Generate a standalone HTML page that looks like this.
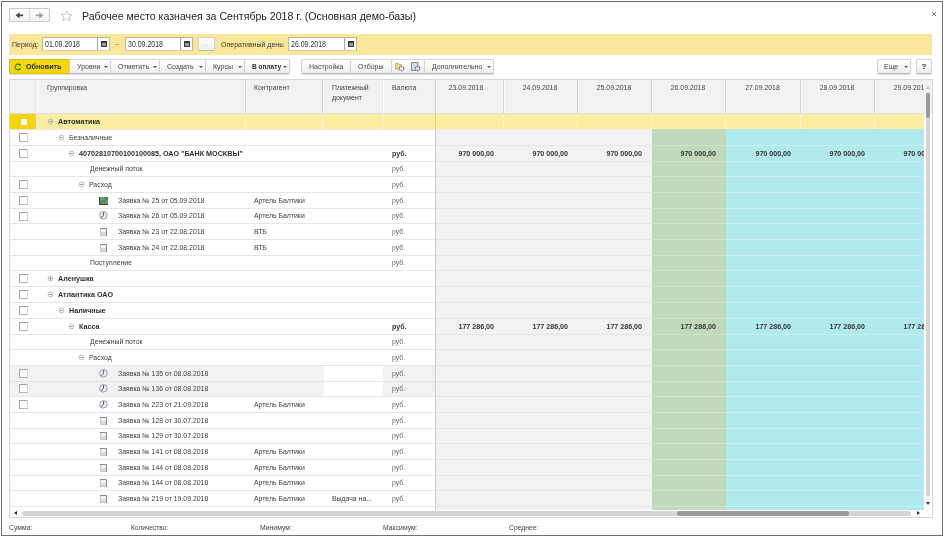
<!DOCTYPE html>
<html><head><meta charset="utf-8"><style>
*{margin:0;padding:0;box-sizing:border-box}
html,body{width:943px;height:536px;overflow:hidden;background:#fff;font-family:"Liberation Sans",sans-serif;color:#3c3c3c}
.a{position:absolute}
.t{position:absolute;white-space:nowrap;line-height:10px;height:10px}
.btn{position:absolute;top:59px;height:15px;border:1px solid #d2d2d2;border-bottom-color:#b5b5b5;border-radius:1.5px;box-shadow:0 1px 1px rgba(0,0,0,0.12);background:linear-gradient(#ffffff,#eeeeee);font-size:7px;line-height:13px;color:#4a4a4a;white-space:nowrap}
.arr{position:absolute;top:6px;width:0;height:0;border-left:2px solid transparent;border-right:2px solid transparent;border-top:2px solid #555}
.inp{position:absolute;top:37px;height:14px;background:#fff;border:1px solid #c2b88f;border-bottom-color:#d8cfa8;font-size:7px;line-height:12px;color:#333}
.cal{position:absolute;top:0;right:0;width:12px;height:12px;border-left:1px solid #a8a8a8;background:#fff}
.cal:after{content:"";box-sizing:border-box;position:absolute;left:3px;top:3px;width:6px;height:6px;background:#9a9a9a;border:1px solid #3a3a3a;border-top-width:2px}
.cb{position:absolute;width:9px;height:9px;border:1px solid #a4a4a4;border-right-color:#d4d4d4;border-bottom-color:#b4b4b4;background:#fff}
</style></head><body><div style="position:absolute;left:0;top:0;width:943px;height:536px;overflow:hidden;filter:blur(0.35px)">

<div class="a" style="left:1px;top:1px;width:942px;height:535px;border:1px solid #6f6f6f"></div>
<div class="a" style="left:9px;top:8px;width:41px;height:14px;border:1px solid #c9c9c9;border-radius:1px;background:linear-gradient(#fff,#f1f1f1)"></div>
<div class="a" style="left:29px;top:9px;width:1px;height:12px;background:#dedede"></div>
<svg class="a" style="left:14px;top:10px" width="10" height="10" viewBox="0 0 10 10"><path d="M1.6 5.3L5.6 2.2V8.4Z" fill="#484848"/><rect x="5" y="4.5" width="4.2" height="1.7" fill="#484848"/></svg>
<svg class="a" style="left:35px;top:10px" width="10" height="10" viewBox="0 0 10 10"><path d="M8.4 5.3L4.4 2.2V8.4Z" fill="#a0a0a0"/><rect x="0.8" y="4.5" width="4.2" height="1.7" fill="#a0a0a0"/></svg>
<svg class="a" style="left:60px;top:10px" width="13" height="12" viewBox="0 0 13 12"><path d="M6.5 0.8L8.1 4.4L12 4.6L9 7.1L10.1 11L6.5 8.8L2.9 11L4 7.1L1 4.6L4.9 4.4Z" fill="none" stroke="#c4c4c4" stroke-width="0.9"/></svg>
<div class="t" style="left:82px;top:10px;font-size:10.6px;line-height:12px;height:12px;color:#1e1e1e">Рабочее место казначея за Сентябрь 2018 г. (Основная демо-базы)</div>
<svg class="a" style="left:931px;top:11px" width="6" height="6" viewBox="0 0 6 6"><path d="M1 1L5 5M5 1L1 5" stroke="#666" stroke-width="0.9"/></svg>
<div class="a" style="left:9px;top:34px;width:923px;height:21px;background:#f9e79b"></div>
<div class="t" style="left:12px;top:40px;font-size:7px;color:#383838">Период:</div>
<div class="inp" style="left:42px;width:68px"><span style="position:absolute;left:2px;top:0;font-size:8.5px;transform:scaleX(0.82);transform-origin:0 50%">01.09.2018</span><div class="cal"></div></div>
<div class="t" style="left:115px;top:39px;font-size:7px;color:#777">–</div>
<div class="inp" style="left:125px;width:68px"><span style="position:absolute;left:2px;top:0;font-size:8.5px;transform:scaleX(0.82);transform-origin:0 50%">30.09.2018</span><div class="cal"></div></div>
<div class="a" style="left:198px;top:37px;width:17px;height:14px;border:1px solid #d2d2d2;border-bottom-color:#b8b8b8;border-radius:2px;background:linear-gradient(#fff,#efefef);font-size:6px;color:#999;text-align:center;line-height:13px">...</div>
<div class="t" style="left:221px;top:40px;font-size:7px;color:#383838">Оперативный день:</div>
<div class="inp" style="left:288px;width:69px"><span style="position:absolute;left:2px;top:0;font-size:8.5px;transform:scaleX(0.82);transform-origin:0 50%">26.09.2018</span><div class="cal"></div></div>
<div class="btn" style="left:9px;width:61px;background:#f2d80e;border-color:#d9c000;border-radius:1px"><svg class="a" style="left:3.5px;top:3px" width="8" height="8" viewBox="0 0 8 8"><path d="M6.2 2.2A2.8 2.8 0 1 0 6.6 5" fill="none" stroke="#3d8a1e" stroke-width="1.3"/><circle cx="6" cy="1.8" r="1" fill="#2f7a16"/></svg><span style="position:absolute;left:16px;top:0;font-weight:bold;color:#2e2e2e;font-size:7.2px">Обновить</span></div>
<div class="btn" style="left:69px;width:42px"><span style="position:absolute;left:7px;top:0;">Уровни</span><div class="arr" style="left:34px"></div></div>
<div class="btn" style="left:110px;width:50px"><span style="position:absolute;left:7px;top:0;">Отметить</span><div class="arr" style="left:42px"></div></div>
<div class="btn" style="left:159px;width:47px"><span style="position:absolute;left:7px;top:0;">Создать</span><div class="arr" style="left:39px"></div></div>
<div class="btn" style="left:205px;width:40px"><span style="position:absolute;left:7px;top:0;">Курсы</span><div class="arr" style="left:32px"></div></div>
<div class="btn" style="left:244px;width:46px"><span style="position:absolute;left:7px;top:0;font-weight:bold;color:#333;font-size:6.5px">В оплату</span><div class="arr" style="left:38px"></div></div>
<div class="btn" style="left:301px;width:50px"><span style="position:absolute;left:7px;top:0;">Настройка</span></div>
<div class="btn" style="left:350px;width:42px"><span style="position:absolute;left:7px;top:0;">Отборы</span></div>
<div class="btn" style="left:391px;width:34px"><svg class="a" style="left:3px;top:2px" width="10" height="10" viewBox="0 0 10 10"><path d="M0.5 1.5H3.5L4.5 2.5H6.5V7H0.5Z" fill="#e8d98a" stroke="#b9a654" stroke-width="0.8"/><circle cx="6.6" cy="6.6" r="2.3" fill="#e4e4e4" stroke="#6a6a6a" stroke-width="1.1" stroke-dasharray="1.3 0.9"/></svg><svg class="a" style="left:19px;top:2px" width="10" height="10" viewBox="0 0 10 10"><rect x="0.5" y="0.5" width="6.5" height="8" fill="#cfdcee" stroke="#6f86a8" stroke-width="0.9"/><circle cx="6.6" cy="6.6" r="2.3" fill="#e4e4e4" stroke="#5a5a5a" stroke-width="1.1" stroke-dasharray="1.3 0.9"/></svg></div>
<div class="btn" style="left:424px;width:70px"><span style="position:absolute;left:7px;top:0;">Дополнительно</span><div class="arr" style="left:62px"></div></div>
<div class="btn" style="left:877px;width:34px"><span style="position:absolute;left:6px;top:0;">Еще</span><div class="arr" style="left:26px"></div></div>
<div class="btn" style="left:916px;width:16px;font-weight:bold;text-align:center;color:#333;font-size:8px">?</div>
<div class="a" style="left:9px;top:79px;width:924px;height:439px;border:1px solid #d6d6d6;background:#fff"></div>
<div class="a" style="left:10px;top:80px;width:922px;height:33px;background:#f2f2f2"></div>
<div class="a" style="left:436px;top:129px;width:216px;height:381px;background:#f2f2f2"></div>
<div class="a" style="left:652px;top:129px;width:74px;height:381px;background:#c3d9be"></div>
<div class="a" style="left:726px;top:129px;width:198px;height:381px;background:#b1eaec"></div>
<div class="a" style="left:10px;top:113px;width:914px;height:16px;background:#fbeda1"></div>
<div class="a" style="left:10px;top:113px;width:27px;height:16px;background:#f4d40c"></div>
<div class="a" style="left:10px;top:365px;width:426px;height:31px;background:#f2f2f2"></div>
<div class="a" style="left:324px;top:366px;width:59px;height:30px;background:#fff"></div>
<div class="a" style="left:10px;top:129px;width:426px;height:1px;background:#e6e6e6"></div>
<div class="a" style="left:10px;top:145px;width:426px;height:1px;background:#e6e6e6"></div>
<div class="a" style="left:436px;top:145px;width:216px;height:1px;background:#e6e6e6"></div>
<div class="a" style="left:652px;top:145px;width:74px;height:1px;background:#d0e2cc"></div>
<div class="a" style="left:726px;top:145px;width:198px;height:1px;background:#c6eff0"></div>
<div class="a" style="left:10px;top:161px;width:426px;height:1px;background:#e6e6e6"></div>
<div class="a" style="left:436px;top:161px;width:216px;height:1px;background:#e6e6e6"></div>
<div class="a" style="left:652px;top:161px;width:74px;height:1px;background:#d0e2cc"></div>
<div class="a" style="left:726px;top:161px;width:198px;height:1px;background:#c6eff0"></div>
<div class="a" style="left:10px;top:176px;width:426px;height:1px;background:#e6e6e6"></div>
<div class="a" style="left:436px;top:176px;width:216px;height:1px;background:#e6e6e6"></div>
<div class="a" style="left:652px;top:176px;width:74px;height:1px;background:#d0e2cc"></div>
<div class="a" style="left:726px;top:176px;width:198px;height:1px;background:#c6eff0"></div>
<div class="a" style="left:10px;top:192px;width:426px;height:1px;background:#e6e6e6"></div>
<div class="a" style="left:436px;top:192px;width:216px;height:1px;background:#e6e6e6"></div>
<div class="a" style="left:652px;top:192px;width:74px;height:1px;background:#d0e2cc"></div>
<div class="a" style="left:726px;top:192px;width:198px;height:1px;background:#c6eff0"></div>
<div class="a" style="left:10px;top:208px;width:426px;height:1px;background:#e6e6e6"></div>
<div class="a" style="left:436px;top:208px;width:216px;height:1px;background:#e6e6e6"></div>
<div class="a" style="left:652px;top:208px;width:74px;height:1px;background:#d0e2cc"></div>
<div class="a" style="left:726px;top:208px;width:198px;height:1px;background:#c6eff0"></div>
<div class="a" style="left:10px;top:223px;width:426px;height:1px;background:#e6e6e6"></div>
<div class="a" style="left:436px;top:223px;width:216px;height:1px;background:#e6e6e6"></div>
<div class="a" style="left:652px;top:223px;width:74px;height:1px;background:#d0e2cc"></div>
<div class="a" style="left:726px;top:223px;width:198px;height:1px;background:#c6eff0"></div>
<div class="a" style="left:10px;top:239px;width:426px;height:1px;background:#e6e6e6"></div>
<div class="a" style="left:436px;top:239px;width:216px;height:1px;background:#e6e6e6"></div>
<div class="a" style="left:652px;top:239px;width:74px;height:1px;background:#d0e2cc"></div>
<div class="a" style="left:726px;top:239px;width:198px;height:1px;background:#c6eff0"></div>
<div class="a" style="left:10px;top:255px;width:426px;height:1px;background:#e6e6e6"></div>
<div class="a" style="left:436px;top:255px;width:216px;height:1px;background:#e6e6e6"></div>
<div class="a" style="left:652px;top:255px;width:74px;height:1px;background:#d0e2cc"></div>
<div class="a" style="left:726px;top:255px;width:198px;height:1px;background:#c6eff0"></div>
<div class="a" style="left:10px;top:270px;width:426px;height:1px;background:#e6e6e6"></div>
<div class="a" style="left:436px;top:270px;width:216px;height:1px;background:#e6e6e6"></div>
<div class="a" style="left:652px;top:270px;width:74px;height:1px;background:#d0e2cc"></div>
<div class="a" style="left:726px;top:270px;width:198px;height:1px;background:#c6eff0"></div>
<div class="a" style="left:10px;top:286px;width:426px;height:1px;background:#e6e6e6"></div>
<div class="a" style="left:436px;top:286px;width:216px;height:1px;background:#e6e6e6"></div>
<div class="a" style="left:652px;top:286px;width:74px;height:1px;background:#d0e2cc"></div>
<div class="a" style="left:726px;top:286px;width:198px;height:1px;background:#c6eff0"></div>
<div class="a" style="left:10px;top:302px;width:426px;height:1px;background:#e6e6e6"></div>
<div class="a" style="left:436px;top:302px;width:216px;height:1px;background:#e6e6e6"></div>
<div class="a" style="left:652px;top:302px;width:74px;height:1px;background:#d0e2cc"></div>
<div class="a" style="left:726px;top:302px;width:198px;height:1px;background:#c6eff0"></div>
<div class="a" style="left:10px;top:318px;width:426px;height:1px;background:#e6e6e6"></div>
<div class="a" style="left:436px;top:318px;width:216px;height:1px;background:#e6e6e6"></div>
<div class="a" style="left:652px;top:318px;width:74px;height:1px;background:#d0e2cc"></div>
<div class="a" style="left:726px;top:318px;width:198px;height:1px;background:#c6eff0"></div>
<div class="a" style="left:10px;top:334px;width:426px;height:1px;background:#e6e6e6"></div>
<div class="a" style="left:436px;top:334px;width:216px;height:1px;background:#e6e6e6"></div>
<div class="a" style="left:652px;top:334px;width:74px;height:1px;background:#d0e2cc"></div>
<div class="a" style="left:726px;top:334px;width:198px;height:1px;background:#c6eff0"></div>
<div class="a" style="left:10px;top:349px;width:426px;height:1px;background:#e6e6e6"></div>
<div class="a" style="left:436px;top:349px;width:216px;height:1px;background:#e6e6e6"></div>
<div class="a" style="left:652px;top:349px;width:74px;height:1px;background:#d0e2cc"></div>
<div class="a" style="left:726px;top:349px;width:198px;height:1px;background:#c6eff0"></div>
<div class="a" style="left:10px;top:365px;width:426px;height:1px;background:#e6e6e6"></div>
<div class="a" style="left:436px;top:365px;width:216px;height:1px;background:#e6e6e6"></div>
<div class="a" style="left:652px;top:365px;width:74px;height:1px;background:#d0e2cc"></div>
<div class="a" style="left:726px;top:365px;width:198px;height:1px;background:#c6eff0"></div>
<div class="a" style="left:10px;top:381px;width:426px;height:1px;background:#e6e6e6"></div>
<div class="a" style="left:436px;top:381px;width:216px;height:1px;background:#e6e6e6"></div>
<div class="a" style="left:652px;top:381px;width:74px;height:1px;background:#d0e2cc"></div>
<div class="a" style="left:726px;top:381px;width:198px;height:1px;background:#c6eff0"></div>
<div class="a" style="left:10px;top:396px;width:426px;height:1px;background:#e6e6e6"></div>
<div class="a" style="left:436px;top:396px;width:216px;height:1px;background:#e6e6e6"></div>
<div class="a" style="left:652px;top:396px;width:74px;height:1px;background:#d0e2cc"></div>
<div class="a" style="left:726px;top:396px;width:198px;height:1px;background:#c6eff0"></div>
<div class="a" style="left:10px;top:412px;width:426px;height:1px;background:#e6e6e6"></div>
<div class="a" style="left:436px;top:412px;width:216px;height:1px;background:#e6e6e6"></div>
<div class="a" style="left:652px;top:412px;width:74px;height:1px;background:#d0e2cc"></div>
<div class="a" style="left:726px;top:412px;width:198px;height:1px;background:#c6eff0"></div>
<div class="a" style="left:10px;top:428px;width:426px;height:1px;background:#e6e6e6"></div>
<div class="a" style="left:436px;top:428px;width:216px;height:1px;background:#e6e6e6"></div>
<div class="a" style="left:652px;top:428px;width:74px;height:1px;background:#d0e2cc"></div>
<div class="a" style="left:726px;top:428px;width:198px;height:1px;background:#c6eff0"></div>
<div class="a" style="left:10px;top:443px;width:426px;height:1px;background:#e6e6e6"></div>
<div class="a" style="left:436px;top:443px;width:216px;height:1px;background:#e6e6e6"></div>
<div class="a" style="left:652px;top:443px;width:74px;height:1px;background:#d0e2cc"></div>
<div class="a" style="left:726px;top:443px;width:198px;height:1px;background:#c6eff0"></div>
<div class="a" style="left:10px;top:459px;width:426px;height:1px;background:#e6e6e6"></div>
<div class="a" style="left:436px;top:459px;width:216px;height:1px;background:#e6e6e6"></div>
<div class="a" style="left:652px;top:459px;width:74px;height:1px;background:#d0e2cc"></div>
<div class="a" style="left:726px;top:459px;width:198px;height:1px;background:#c6eff0"></div>
<div class="a" style="left:10px;top:475px;width:426px;height:1px;background:#e6e6e6"></div>
<div class="a" style="left:436px;top:475px;width:216px;height:1px;background:#e6e6e6"></div>
<div class="a" style="left:652px;top:475px;width:74px;height:1px;background:#d0e2cc"></div>
<div class="a" style="left:726px;top:475px;width:198px;height:1px;background:#c6eff0"></div>
<div class="a" style="left:10px;top:490px;width:426px;height:1px;background:#e6e6e6"></div>
<div class="a" style="left:436px;top:490px;width:216px;height:1px;background:#e6e6e6"></div>
<div class="a" style="left:652px;top:490px;width:74px;height:1px;background:#d0e2cc"></div>
<div class="a" style="left:726px;top:490px;width:198px;height:1px;background:#c6eff0"></div>
<div class="a" style="left:10px;top:506px;width:426px;height:1px;background:#e6e6e6"></div>
<div class="a" style="left:436px;top:506px;width:216px;height:1px;background:#e6e6e6"></div>
<div class="a" style="left:652px;top:506px;width:74px;height:1px;background:#d0e2cc"></div>
<div class="a" style="left:726px;top:506px;width:198px;height:1px;background:#c6eff0"></div>
<div class="a" style="left:36px;top:80px;width:1px;height:33px;background:#e8e8e8"></div>
<div class="a" style="left:37px;top:80px;width:1px;height:33px;background:#ffffff"></div>
<div class="a" style="left:36px;top:113px;width:1px;height:16px;background:#fff6c8"></div>
<div class="a" style="left:245px;top:80px;width:1px;height:33px;background:#d4d4d4"></div>
<div class="a" style="left:246px;top:80px;width:1px;height:33px;background:#fafafa"></div>
<div class="a" style="left:245px;top:113px;width:1px;height:16px;background:#fff6c8"></div>
<div class="a" style="left:322px;top:80px;width:1px;height:33px;background:#d4d4d4"></div>
<div class="a" style="left:323px;top:80px;width:1px;height:33px;background:#fafafa"></div>
<div class="a" style="left:322px;top:113px;width:1px;height:16px;background:#fff6c8"></div>
<div class="a" style="left:382px;top:80px;width:1px;height:33px;background:#e8e8e8"></div>
<div class="a" style="left:383px;top:80px;width:1px;height:33px;background:#ffffff"></div>
<div class="a" style="left:382px;top:113px;width:1px;height:16px;background:#fff6c8"></div>
<div class="a" style="left:435px;top:80px;width:1px;height:33px;background:#d4d4d4"></div>
<div class="a" style="left:436px;top:80px;width:1px;height:33px;background:#fafafa"></div>
<div class="a" style="left:435px;top:113px;width:1px;height:16px;background:#fff6c8"></div>
<div class="a" style="left:503px;top:80px;width:1px;height:33px;background:#d4d4d4"></div>
<div class="a" style="left:504px;top:80px;width:1px;height:33px;background:#fafafa"></div>
<div class="a" style="left:503px;top:113px;width:1px;height:16px;background:#fff6c8"></div>
<div class="a" style="left:577px;top:80px;width:1px;height:33px;background:#d4d4d4"></div>
<div class="a" style="left:578px;top:80px;width:1px;height:33px;background:#fafafa"></div>
<div class="a" style="left:577px;top:113px;width:1px;height:16px;background:#fff6c8"></div>
<div class="a" style="left:651px;top:80px;width:1px;height:33px;background:#d4d4d4"></div>
<div class="a" style="left:652px;top:80px;width:1px;height:33px;background:#fafafa"></div>
<div class="a" style="left:651px;top:113px;width:1px;height:16px;background:#fff6c8"></div>
<div class="a" style="left:725px;top:80px;width:1px;height:33px;background:#d4d4d4"></div>
<div class="a" style="left:726px;top:80px;width:1px;height:33px;background:#fafafa"></div>
<div class="a" style="left:725px;top:113px;width:1px;height:16px;background:#fff6c8"></div>
<div class="a" style="left:800px;top:80px;width:1px;height:33px;background:#d4d4d4"></div>
<div class="a" style="left:801px;top:80px;width:1px;height:33px;background:#fafafa"></div>
<div class="a" style="left:800px;top:113px;width:1px;height:16px;background:#fff6c8"></div>
<div class="a" style="left:874px;top:80px;width:1px;height:33px;background:#d4d4d4"></div>
<div class="a" style="left:875px;top:80px;width:1px;height:33px;background:#fafafa"></div>
<div class="a" style="left:874px;top:113px;width:1px;height:16px;background:#fff6c8"></div>
<div class="a" style="left:435px;top:80px;width:1px;height:430px;background:#cdcdcd"></div>
<div class="a" style="left:10px;top:113px;width:914px;height:1px;background:#e0e0e0"></div>
<div class="t" style="left:47px;top:83px;font-size:6.9px;line-height:9.5px;height:auto;color:#444">Группировка</div>
<div class="t" style="left:254px;top:83px;font-size:6.9px;line-height:9.5px;height:auto;color:#444">Контрагент</div>
<div class="t" style="left:332px;top:83px;font-size:6.9px;line-height:9.5px;height:auto;color:#444">Платежный<br>документ</div>
<div class="t" style="left:392px;top:83px;font-size:6.9px;line-height:9.5px;height:auto;color:#444">Валюта</div>
<div class="t" style="left:429px;width:74px;top:83px;font-size:6.9px;text-align:center;color:#444">23.09.2018</div>
<div class="t" style="left:503px;width:74px;top:83px;font-size:6.9px;text-align:center;color:#444">24.09.2018</div>
<div class="t" style="left:577px;width:74px;top:83px;font-size:6.9px;text-align:center;color:#444">25.09.2018</div>
<div class="t" style="left:651px;width:74px;top:83px;font-size:6.9px;text-align:center;color:#444">26.09.2018</div>
<div class="t" style="left:725px;width:75px;top:83px;font-size:6.9px;text-align:center;color:#444">27.09.2018</div>
<div class="t" style="left:800px;width:74px;top:83px;font-size:6.9px;text-align:center;color:#444">28.09.2018</div>
<div class="a" style="left:874px;top:80px;width:50px;height:33px;overflow:hidden"><div class="t" style="left:0;width:74px;top:3px;font-size:6.9px;text-align:center;color:#444">29.09.2018</div></div>
<div class="a" style="left:924px;top:113px;width:8px;height:404px;background:#fff"></div>
<div class="a" style="left:926px;top:86px;width:0;height:0;border-left:2px solid transparent;border-right:2px solid transparent;border-bottom:3px solid #c4c4c4"></div>
<div class="a" style="left:926px;top:92px;width:4px;height:405px;border-radius:2px;background:#d5d5d5"></div>
<div class="a" style="left:926px;top:93px;width:4px;height:25px;border-radius:2px;background:#999"></div>
<div class="a" style="left:926px;top:502px;width:0;height:0;border-left:2.5px solid transparent;border-right:2.5px solid transparent;border-top:3px solid #333"></div>
<div class="a" style="left:10px;top:510px;width:914px;height:7px;background:#fff"></div>
<div class="a" style="left:14px;top:511px;width:0;height:0;border-top:2.5px solid transparent;border-bottom:2.5px solid transparent;border-right:3px solid #333"></div>
<div class="a" style="left:22px;top:511px;width:889px;height:5px;border-radius:2.5px;background:#d5d5d5"></div>
<div class="a" style="left:677px;top:511px;width:172px;height:5px;border-radius:2.5px;background:#9a9a9a"></div>
<div class="a" style="left:917px;top:511px;width:0;height:0;border-top:2.5px solid transparent;border-bottom:2.5px solid transparent;border-left:3px solid #333"></div>
<div class="cb" style="left:20px;top:118px;width:8px;height:8px;border-color:#e6cc3a;background:#fffbe2"></div>
<svg class="a" style="left:46.5px;top:117.5px" width="7" height="7" viewBox="0 0 7 7"><circle cx="3.5" cy="3.5" r="2.4" fill="none" stroke="#aaa" stroke-width="0.8"/><path d="M2.2 3.5H4.8" stroke="#888" stroke-width="0.9"/></svg>
<div class="t" style="left:58px;top:117px;font-size:7.2px;font-weight:bold;color:#2e2e2e">Автоматика</div>
<div class="cb" style="left:19px;top:133px"></div>
<svg class="a" style="left:57.5px;top:133.5px" width="7" height="7" viewBox="0 0 7 7"><circle cx="3.5" cy="3.5" r="2.4" fill="none" stroke="#aaa" stroke-width="0.8"/><path d="M2.2 3.5H4.8" stroke="#888" stroke-width="0.9"/></svg>
<div class="t" style="left:69px;top:133px;font-size:6.9px;font-weight:normal;color:#3c3c3c">Безналичные</div>
<div class="cb" style="left:19px;top:149px"></div>
<svg class="a" style="left:67.5px;top:149.5px" width="7" height="7" viewBox="0 0 7 7"><circle cx="3.5" cy="3.5" r="2.4" fill="none" stroke="#aaa" stroke-width="0.8"/><path d="M2.2 3.5H4.8" stroke="#888" stroke-width="0.9"/></svg>
<div class="t" style="left:79px;top:149px;font-size:7.2px;font-weight:bold;color:#2e2e2e">40702810700100100085, ОАО "БАНК МОСКВЫ"</div>
<div class="t" style="left:392px;top:149px;font-size:7.1px;font-weight:bold;color:#333">руб.</div>
<div class="t" style="left:429px;width:65px;top:149px;font-size:7.1px;font-weight:bold;color:#333;text-align:right">970 000,00</div>
<div class="t" style="left:503px;width:65px;top:149px;font-size:7.1px;font-weight:bold;color:#333;text-align:right">970 000,00</div>
<div class="t" style="left:577px;width:65px;top:149px;font-size:7.1px;font-weight:bold;color:#333;text-align:right">970 000,00</div>
<div class="t" style="left:651px;width:65px;top:149px;font-size:7.1px;font-weight:bold;color:#333;text-align:right">970 000,00</div>
<div class="t" style="left:725px;width:66px;top:149px;font-size:7.1px;font-weight:bold;color:#333;text-align:right">970 000,00</div>
<div class="t" style="left:800px;width:65px;top:149px;font-size:7.1px;font-weight:bold;color:#333;text-align:right">970 000,00</div>
<div class="a" style="left:874px;top:146px;width:50px;height:15px;overflow:hidden"><div class="t" style="left:0;width:65px;top:3px;font-size:7.1px;font-weight:bold;color:#333;text-align:right">970 000,00</div></div>
<div class="t" style="left:90px;top:164px;font-size:6.9px;font-weight:normal;color:#3c3c3c">Денежный поток</div>
<div class="t" style="left:392px;top:164px;font-size:6.9px;font-weight:normal;color:#666">руб.</div>
<div class="cb" style="left:19px;top:180px"></div>
<svg class="a" style="left:77.5px;top:180.5px" width="7" height="7" viewBox="0 0 7 7"><circle cx="3.5" cy="3.5" r="2.4" fill="none" stroke="#aaa" stroke-width="0.8"/><path d="M2.2 3.5H4.8" stroke="#888" stroke-width="0.9"/></svg>
<div class="t" style="left:89px;top:180px;font-size:6.9px;font-weight:normal;color:#3c3c3c">Расход</div>
<div class="t" style="left:392px;top:180px;font-size:6.9px;font-weight:normal;color:#666">руб.</div>
<div class="cb" style="left:19px;top:196px"></div>
<svg class="a" style="left:99px;top:197px" width="9" height="8" viewBox="0 0 9 8"><rect x="0" y="0" width="9" height="8" fill="#6f9f6c"/><path d="M0.6 0V8M0 7.4H9" stroke="#3e4a40" stroke-width="1.2"/><path d="M2 5.5L4 3.5L5.5 4.8L8 2" fill="none" stroke="#2f6e3a" stroke-width="1"/><rect x="5.5" y="0" width="3.5" height="1.6" fill="#3b6a9a"/></svg>
<div class="t" style="left:118px;top:196px;font-size:6.9px;font-weight:normal;color:#3c3c3c">Заявка № 25 от 05.09.2018</div>
<div class="t" style="left:254px;top:196px;font-size:6.9px">Артель Балтики</div>
<div class="t" style="left:392px;top:196px;font-size:6.9px;font-weight:normal;color:#666">руб.</div>
<div class="cb" style="left:19px;top:212px"></div>
<svg class="a" style="left:99px;top:211px" width="9" height="9" viewBox="0 0 9 9"><circle cx="4.4" cy="4.3" r="3.8" fill="#eef0f3" stroke="#8e96a3" stroke-width="0.9"/><path d="M4.6 1.3V4.4L2.2 6.6" fill="none" stroke="#4b4f57" stroke-width="1"/></svg>
<div class="t" style="left:118px;top:211px;font-size:6.9px;font-weight:normal;color:#3c3c3c">Заявка № 26 от 05.09.2018</div>
<div class="t" style="left:254px;top:211px;font-size:6.9px">Артель Балтики</div>
<div class="t" style="left:392px;top:211px;font-size:6.9px;font-weight:normal;color:#666">руб.</div>
<svg class="a" style="left:100px;top:228px" width="7" height="8" viewBox="0 0 7 8"><rect x="0" y="0" width="7" height="8" fill="#d6dade"/><rect x="0.5" y="1" width="5.5" height="3" fill="#eef3f9"/><path d="M0.5 0.5V7.5H6.5" fill="none" stroke="#c4c8cc" stroke-width="1"/><path d="M0 0.5H6.5V8" fill="none" stroke="#8c8c8c" stroke-width="1"/></svg>
<div class="t" style="left:118px;top:227px;font-size:6.9px;font-weight:normal;color:#3c3c3c">Заявка № 23 от 22.08.2018</div>
<div class="t" style="left:254px;top:227px;font-size:6.9px">ВТБ</div>
<div class="t" style="left:392px;top:227px;font-size:6.9px;font-weight:normal;color:#666">руб.</div>
<svg class="a" style="left:100px;top:244px" width="7" height="8" viewBox="0 0 7 8"><rect x="0" y="0" width="7" height="8" fill="#d6dade"/><rect x="0.5" y="1" width="5.5" height="3" fill="#eef3f9"/><path d="M0.5 0.5V7.5H6.5" fill="none" stroke="#c4c8cc" stroke-width="1"/><path d="M0 0.5H6.5V8" fill="none" stroke="#8c8c8c" stroke-width="1"/></svg>
<div class="t" style="left:118px;top:243px;font-size:6.9px;font-weight:normal;color:#3c3c3c">Заявка № 24 от 22.08.2018</div>
<div class="t" style="left:254px;top:243px;font-size:6.9px">ВТБ</div>
<div class="t" style="left:392px;top:243px;font-size:6.9px;font-weight:normal;color:#666">руб.</div>
<div class="t" style="left:90px;top:258px;font-size:6.9px;font-weight:normal;color:#3c3c3c">Поступление</div>
<div class="t" style="left:392px;top:258px;font-size:6.9px;font-weight:normal;color:#666">руб.</div>
<div class="cb" style="left:19px;top:274px"></div>
<svg class="a" style="left:46.5px;top:274.5px" width="7" height="7" viewBox="0 0 7 7"><circle cx="3.5" cy="3.5" r="2.4" fill="none" stroke="#aaa" stroke-width="0.8"/><path d="M2.2 3.5H4.8" stroke="#888" stroke-width="0.9"/><path d="M3.5 2.2V4.8" stroke="#888" stroke-width="0.9"/></svg>
<div class="t" style="left:58px;top:274px;font-size:7.2px;font-weight:bold;color:#2e2e2e">Аленушка</div>
<div class="cb" style="left:19px;top:290px"></div>
<svg class="a" style="left:46.5px;top:290.5px" width="7" height="7" viewBox="0 0 7 7"><circle cx="3.5" cy="3.5" r="2.4" fill="none" stroke="#aaa" stroke-width="0.8"/><path d="M2.2 3.5H4.8" stroke="#888" stroke-width="0.9"/></svg>
<div class="t" style="left:58px;top:290px;font-size:7.2px;font-weight:bold;color:#2e2e2e">Атлантика ОАО</div>
<div class="cb" style="left:19px;top:306px"></div>
<svg class="a" style="left:57.5px;top:306.5px" width="7" height="7" viewBox="0 0 7 7"><circle cx="3.5" cy="3.5" r="2.4" fill="none" stroke="#aaa" stroke-width="0.8"/><path d="M2.2 3.5H4.8" stroke="#888" stroke-width="0.9"/></svg>
<div class="t" style="left:69px;top:306px;font-size:7.2px;font-weight:bold;color:#2e2e2e">Наличные</div>
<div class="cb" style="left:19px;top:322px"></div>
<svg class="a" style="left:67.5px;top:322.5px" width="7" height="7" viewBox="0 0 7 7"><circle cx="3.5" cy="3.5" r="2.4" fill="none" stroke="#aaa" stroke-width="0.8"/><path d="M2.2 3.5H4.8" stroke="#888" stroke-width="0.9"/></svg>
<div class="t" style="left:79px;top:322px;font-size:7.2px;font-weight:bold;color:#2e2e2e">Касса</div>
<div class="t" style="left:392px;top:322px;font-size:7.1px;font-weight:bold;color:#333">руб.</div>
<div class="t" style="left:429px;width:65px;top:322px;font-size:7.1px;font-weight:bold;color:#333;text-align:right">177 286,00</div>
<div class="t" style="left:503px;width:65px;top:322px;font-size:7.1px;font-weight:bold;color:#333;text-align:right">177 286,00</div>
<div class="t" style="left:577px;width:65px;top:322px;font-size:7.1px;font-weight:bold;color:#333;text-align:right">177 286,00</div>
<div class="t" style="left:651px;width:65px;top:322px;font-size:7.1px;font-weight:bold;color:#333;text-align:right">177 286,00</div>
<div class="t" style="left:725px;width:66px;top:322px;font-size:7.1px;font-weight:bold;color:#333;text-align:right">177 286,00</div>
<div class="t" style="left:800px;width:65px;top:322px;font-size:7.1px;font-weight:bold;color:#333;text-align:right">177 286,00</div>
<div class="a" style="left:874px;top:319px;width:50px;height:15px;overflow:hidden"><div class="t" style="left:0;width:65px;top:3px;font-size:7.1px;font-weight:bold;color:#333;text-align:right">177 286,00</div></div>
<div class="t" style="left:90px;top:337px;font-size:6.9px;font-weight:normal;color:#3c3c3c">Денежный поток</div>
<div class="t" style="left:392px;top:337px;font-size:6.9px;font-weight:normal;color:#666">руб.</div>
<svg class="a" style="left:77.5px;top:353.5px" width="7" height="7" viewBox="0 0 7 7"><circle cx="3.5" cy="3.5" r="2.4" fill="none" stroke="#aaa" stroke-width="0.8"/><path d="M2.2 3.5H4.8" stroke="#888" stroke-width="0.9"/></svg>
<div class="t" style="left:89px;top:353px;font-size:6.9px;font-weight:normal;color:#3c3c3c">Расход</div>
<div class="t" style="left:392px;top:353px;font-size:6.9px;font-weight:normal;color:#666">руб.</div>
<div class="cb" style="left:19px;top:369px"></div>
<svg class="a" style="left:99px;top:369px" width="9" height="9" viewBox="0 0 9 9"><circle cx="4.4" cy="4.3" r="3.8" fill="#eef0f3" stroke="#8e96a3" stroke-width="0.9"/><path d="M4.6 1.3V4.4L2.2 6.6" fill="none" stroke="#4b4f57" stroke-width="1"/></svg>
<div class="t" style="left:118px;top:369px;font-size:6.9px;font-weight:normal;color:#3c3c3c">Заявка № 135 от 08.08.2018</div>
<div class="t" style="left:392px;top:369px;font-size:6.9px;font-weight:normal;color:#666">руб.</div>
<div class="cb" style="left:19px;top:384px"></div>
<svg class="a" style="left:99px;top:384px" width="9" height="9" viewBox="0 0 9 9"><circle cx="4.4" cy="4.3" r="3.8" fill="#eef0f3" stroke="#8e96a3" stroke-width="0.9"/><path d="M4.6 1.3V4.4L2.2 6.6" fill="none" stroke="#4b4f57" stroke-width="1"/></svg>
<div class="t" style="left:118px;top:384px;font-size:6.9px;font-weight:normal;color:#3c3c3c">Заявка № 136 от 08.08.2018</div>
<div class="t" style="left:392px;top:384px;font-size:6.9px;font-weight:normal;color:#666">руб.</div>
<div class="cb" style="left:19px;top:400px"></div>
<svg class="a" style="left:99px;top:400px" width="9" height="9" viewBox="0 0 9 9"><circle cx="4.4" cy="4.3" r="3.8" fill="#eef0f3" stroke="#8e96a3" stroke-width="0.9"/><path d="M4.6 1.3V4.4L2.2 6.6" fill="none" stroke="#4b4f57" stroke-width="1"/></svg>
<div class="t" style="left:118px;top:400px;font-size:6.9px;font-weight:normal;color:#3c3c3c">Заявка № 223 от 21.09.2018</div>
<div class="t" style="left:254px;top:400px;font-size:6.9px">Артель Балтики</div>
<div class="t" style="left:392px;top:400px;font-size:6.9px;font-weight:normal;color:#666">руб.</div>
<svg class="a" style="left:100px;top:417px" width="7" height="8" viewBox="0 0 7 8"><rect x="0" y="0" width="7" height="8" fill="#d6dade"/><rect x="0.5" y="1" width="5.5" height="3" fill="#eef3f9"/><path d="M0.5 0.5V7.5H6.5" fill="none" stroke="#c4c8cc" stroke-width="1"/><path d="M0 0.5H6.5V8" fill="none" stroke="#8c8c8c" stroke-width="1"/></svg>
<div class="t" style="left:118px;top:416px;font-size:6.9px;font-weight:normal;color:#3c3c3c">Заявка № 128 от 30.07.2018</div>
<div class="t" style="left:392px;top:416px;font-size:6.9px;font-weight:normal;color:#666">руб.</div>
<svg class="a" style="left:100px;top:432px" width="7" height="8" viewBox="0 0 7 8"><rect x="0" y="0" width="7" height="8" fill="#d6dade"/><rect x="0.5" y="1" width="5.5" height="3" fill="#eef3f9"/><path d="M0.5 0.5V7.5H6.5" fill="none" stroke="#c4c8cc" stroke-width="1"/><path d="M0 0.5H6.5V8" fill="none" stroke="#8c8c8c" stroke-width="1"/></svg>
<div class="t" style="left:118px;top:431px;font-size:6.9px;font-weight:normal;color:#3c3c3c">Заявка № 129 от 30.07.2018</div>
<div class="t" style="left:392px;top:431px;font-size:6.9px;font-weight:normal;color:#666">руб.</div>
<svg class="a" style="left:100px;top:448px" width="7" height="8" viewBox="0 0 7 8"><rect x="0" y="0" width="7" height="8" fill="#d6dade"/><rect x="0.5" y="1" width="5.5" height="3" fill="#eef3f9"/><path d="M0.5 0.5V7.5H6.5" fill="none" stroke="#c4c8cc" stroke-width="1"/><path d="M0 0.5H6.5V8" fill="none" stroke="#8c8c8c" stroke-width="1"/></svg>
<div class="t" style="left:118px;top:447px;font-size:6.9px;font-weight:normal;color:#3c3c3c">Заявка № 141 от 08.08.2018</div>
<div class="t" style="left:254px;top:447px;font-size:6.9px">Артель Балтики</div>
<div class="t" style="left:392px;top:447px;font-size:6.9px;font-weight:normal;color:#666">руб.</div>
<svg class="a" style="left:100px;top:464px" width="7" height="8" viewBox="0 0 7 8"><rect x="0" y="0" width="7" height="8" fill="#d6dade"/><rect x="0.5" y="1" width="5.5" height="3" fill="#eef3f9"/><path d="M0.5 0.5V7.5H6.5" fill="none" stroke="#c4c8cc" stroke-width="1"/><path d="M0 0.5H6.5V8" fill="none" stroke="#8c8c8c" stroke-width="1"/></svg>
<div class="t" style="left:118px;top:463px;font-size:6.9px;font-weight:normal;color:#3c3c3c">Заявка № 144 от 08.08.2018</div>
<div class="t" style="left:254px;top:463px;font-size:6.9px">Артель Балтики</div>
<div class="t" style="left:392px;top:463px;font-size:6.9px;font-weight:normal;color:#666">руб.</div>
<svg class="a" style="left:100px;top:479px" width="7" height="8" viewBox="0 0 7 8"><rect x="0" y="0" width="7" height="8" fill="#d6dade"/><rect x="0.5" y="1" width="5.5" height="3" fill="#eef3f9"/><path d="M0.5 0.5V7.5H6.5" fill="none" stroke="#c4c8cc" stroke-width="1"/><path d="M0 0.5H6.5V8" fill="none" stroke="#8c8c8c" stroke-width="1"/></svg>
<div class="t" style="left:118px;top:478px;font-size:6.9px;font-weight:normal;color:#3c3c3c">Заявка № 144 от 08.08.2018</div>
<div class="t" style="left:254px;top:478px;font-size:6.9px">Артель Балтики</div>
<div class="t" style="left:392px;top:478px;font-size:6.9px;font-weight:normal;color:#666">руб.</div>
<svg class="a" style="left:100px;top:495px" width="7" height="8" viewBox="0 0 7 8"><rect x="0" y="0" width="7" height="8" fill="#d6dade"/><rect x="0.5" y="1" width="5.5" height="3" fill="#eef3f9"/><path d="M0.5 0.5V7.5H6.5" fill="none" stroke="#c4c8cc" stroke-width="1"/><path d="M0 0.5H6.5V8" fill="none" stroke="#8c8c8c" stroke-width="1"/></svg>
<div class="t" style="left:118px;top:494px;font-size:6.9px;font-weight:normal;color:#3c3c3c">Заявка № 219 от 19.09.2018</div>
<div class="t" style="left:254px;top:494px;font-size:6.9px">Артель Балтики</div>
<div class="t" style="left:332px;top:494px;font-size:6.9px">Выдача на...</div>
<div class="t" style="left:392px;top:494px;font-size:6.9px;font-weight:normal;color:#666">руб.</div>
<div class="t" style="left:9px;top:523px;font-size:6.85px;color:#444">Сумма:</div>
<div class="t" style="left:131px;top:523px;font-size:6.6px;color:#444">Количество:</div>
<div class="t" style="left:260px;top:523px;font-size:6.85px;color:#444">Минимум:</div>
<div class="t" style="left:383px;top:523px;font-size:6.85px;color:#444">Максимум:</div>
<div class="t" style="left:509px;top:523px;font-size:6.8px;color:#444">Среднее:</div>
</div></body></html>
